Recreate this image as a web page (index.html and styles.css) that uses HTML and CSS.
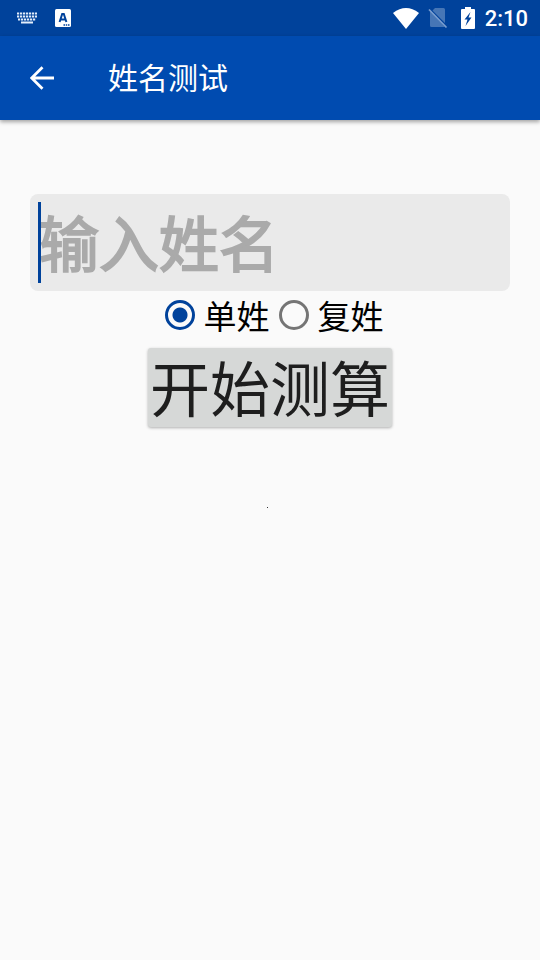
FILE: index.html
```html
<!DOCTYPE html>
<html lang="zh-CN">
<head>
<meta charset="utf-8">
<meta name="viewport" content="width=device-width, initial-scale=1">
<title>姓名测试</title>
<link rel="stylesheet" href="styles.css">
</head>
<body>
<div class="status">
  <svg class="icon-keyboard" width="22" height="12" viewBox="0 0 22 12" aria-hidden="true">
    <path d="M1 1.500h20M1 4.500h20M2 7.500h18" fill="none" stroke="#e4eefb" stroke-width="2" stroke-dasharray="2.200 .8"/>
    <path d="M5 10.500h12" stroke="#e4eefb" stroke-width="2"/>
  </svg>
  <svg class="icon-app" width="16" height="18" viewBox="0 0 16 18" aria-hidden="true">
    <rect width="16" height="18" rx="1.500" fill="#fff"/>
    <path d="M4.600 13 7.200 5h1.600l2.600 8M5.800 10.400h4.400" fill="none" stroke="#00429b" stroke-width="2"/>
    <path d="M8.500 16h6" stroke="#00429b" stroke-width="1.500" stroke-dasharray="1.500 .75"/>
  </svg>
  <div class="status-right">
    <svg width="26" height="21" viewBox="0 0 26 21" aria-hidden="true">
      <path d="M0 5Q13-5 26 5L13 21Z" fill="#fff"/>
    </svg>
    <svg class="icon-sim" width="20" height="22" viewBox="0 0 20 22" aria-hidden="true">
      <path d="M7 1h8.500q1.500 0 1.500 1.500V16L4.500 3.500ZM2 4l15 16H3.500Q2 20 2 18.500Z" fill="#4676b6"/>
      <path d="M1 2.500 18.500 20.500" stroke="#7b9fd0" stroke-width="1.700"/>
    </svg>
    <svg class="icon-battery" width="14" height="22" viewBox="0 0 14 22" aria-hidden="true">
      <path d="M4 0h6v2h3q1 0 1 1v18q0 1-1 1H1q-1 0-1-1V3q0-1 1-1h3Z" fill="#fff"/>
      <path d="M9.500 5 3.500 12.500h3L4.500 19 10.500 10.500h-3Z" fill="#00429b"/>
    </svg>
    <span class="clock">2:10</span>
  </div>
</div>
<header class="bar">
  <button class="back" type="button" aria-label="返回">
    <svg width="24" height="24" viewBox="0 0 24 24" aria-hidden="true">
      <path d="M24 12H2M12.500 1.200 1.700 12l10.800 10.800" fill="none" stroke="#fff" stroke-width="2.800"/>
    </svg>
  </button>
  <h1 class="title">姓名测试</h1>
</header>
<main class="content">
  <form class="form">
    <div class="field">
      <input class="name" type="text" placeholder="输入姓名" aria-label="输入姓名">
    </div>
    <div class="choices">
      <label class="choice"><input class="radio" type="radio" name="kind" checked>单姓</label>
      <label class="choice"><input class="radio" type="radio" name="kind">复姓</label>
    </div>
    <button class="start" type="button">开始测算</button>
  </form>
  <div class="dot"></div>
</main>
</body>
</html>
```
FILE: styles.css
```css
* {
  box-sizing: border-box;
}

body {
  margin: 0;
  min-height: 100vh;
  background: #fafafa;
  color: #000;
  font-family: "Noto Sans CJK SC", sans-serif;
}

svg {
  display: block;
}

.status {
  display: flex;
  align-items: center;
  height: 36px;
  padding: 0 12px 0 16px;
  background: #00429b;
}

.icon-app {
  margin-left: 17px;
}

.status-right {
  display: flex;
  align-items: center;
  margin-left: auto;
}

.icon-sim {
  margin-left: 9px;
}

.icon-battery {
  margin-left: 13px;
}

.clock {
  padding-top: 2px;
  margin-left: 10px;
  color: #fff;
  font-family: Roboto, sans-serif;
  font-size: 22px;
  font-weight: 500;
  line-height: 34px;
}

.bar {
  display: flex;
  align-items: center;
  height: 84px;
  padding-left: 30px;
  background: #004bb0;
  box-shadow: 0 2px 4px rgba(0, 0, 0, 0.35);
}

.back {
  padding: 0;
  border: 0;
  background: none;
}

.title {
  margin: 0 0 0 54px;
  padding-bottom: 4px;
  color: #fff;
  font-size: 30px;
  font-weight: 400;
  line-height: 44px;
}

.content {
  padding: 74px 30px 0;
}

.form {
  display: flex;
  flex-direction: column;
  align-items: center;
}

.field {
  position: relative;
  width: 100%;
}

.field::before {
  content: "";
  position: absolute;
  top: 8px;
  bottom: 8px;
  left: 8px;
  width: 3px;
  background: #00429b;
}

.name {
  display: block;
  width: 100%;
  height: 97px;
  padding: 0 9px 4px;
  border: 0;
  border-radius: 8px;
  background: #eaeaea;
  font-family: inherit;
  font-size: 60px;
}

.name::placeholder {
  color: #aaa;
  opacity: 1;
  -webkit-text-stroke: 2px #aaa;
}

.choices {
  display: flex;
  gap: 9px;
  height: 48px;
  margin-left: 8px;
}

.choice {
  display: flex;
  align-items: center;
  gap: 9px;
  font-size: 33px;
  line-height: 48px;
}

.radio {
  appearance: none;
  width: 30px;
  height: 30px;
  margin: 0;
  border: 3px solid #757575;
  border-radius: 50%;
}

.radio:checked {
  border-color: #00429b;
  background: radial-gradient(circle, #00429b 7px, transparent 8px);
}

.start {
  height: 79px;
  margin-top: 9px;
  padding: 0 2px 4px;
  border: 0;
  border-radius: 3px;
  background: #d6d8d7;
  box-shadow: 0 1px 3px rgba(0, 0, 0, 0.3);
  color: #1e1e1e;
  font-family: inherit;
  font-size: 60px;
  line-height: 76px;
}

.dot {
  width: 1px;
  height: 1px;
  margin: 80px auto 0 237px;
  background: #333;
}
```
